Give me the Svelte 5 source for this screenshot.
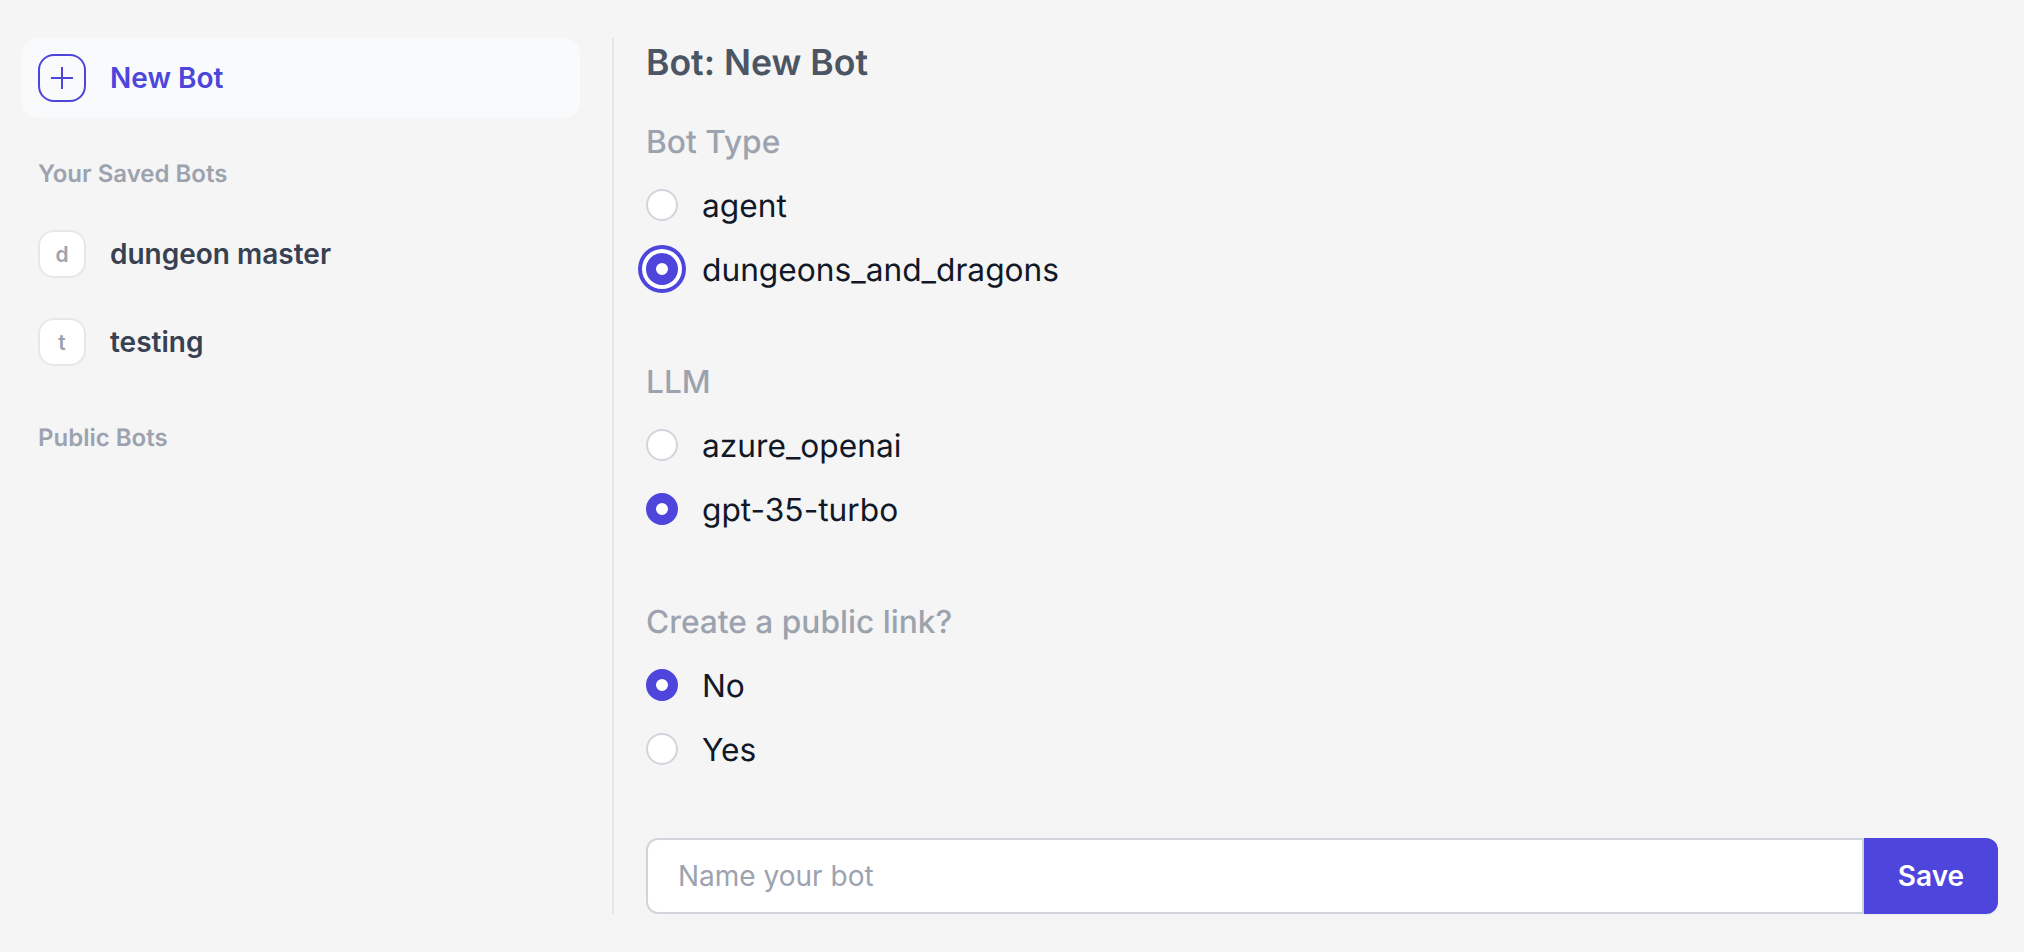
<script>
  let botType = $state("dungeons_and_dragons");
  let llm = $state("gpt-35-turbo");
  let isPublic = $state("No");
  let name = $state("");

  const savedBots = ["dungeon master", "testing"];

  const groups = [
    { label: "Bot Type", options: ["agent", "dungeons_and_dragons"] },
    { label: "LLM", options: ["azure_openai", "gpt-35-turbo"] },
    { label: "Create a public link?", options: ["No", "Yes"] }
  ];

  function getValue(i) {
    return [botType, llm, isPublic][i];
  }
  function setValue(i, v) {
    if (i === 0) botType = v;
    if (i === 1) llm = v;
    if (i === 2) isPublic = v;
  }
</script>

<div class="page">
  <aside class="sidebar">
    <button class="bot-row new-bot">
      <span class="bot-icon plus">
        <svg width="24" height="24" viewBox="0 0 24 24" fill="none" stroke="currentColor" stroke-width="2">
          <path d="M12 1v22M1 12h22" />
        </svg>
      </span>
      New Bot
    </button>

    <h3 class="side-label saved">Your Saved Bots</h3>
    <div class="saved-list">
      {#each savedBots as bot}
        <button class="bot-row">
          <span class="bot-icon">{bot[0]}</span>
          {bot}
        </button>
      {/each}
    </div>

    <h3 class="side-label public">Public Bots</h3>
  </aside>

  <main class="content">
    <h1>Bot: New Bot</h1>

    {#each groups as group, i}
      <fieldset>
        <legend>{group.label}</legend>
        {#each group.options as option}
          <label class="option">
            <input
              type="radio"
              class:focused={option === "dungeons_and_dragons"}
              name={group.label}
              value={option}
              checked={getValue(i) === option}
              onchange={() => setValue(i, option)}
            />
            {option}
          </label>
        {/each}
      </fieldset>
    {/each}

    <form class="save-form" onsubmit={(e) => e.preventDefault()}>
      <input class="name-input" type="text" placeholder="Name your bot" bind:value={name} />
      <button class="save" type="submit">Save</button>
    </form>
  </main>
</div>

<style>
  :global(body) {
    background: #f5f5f5;
    font-family: Inter, "Liberation Sans", sans-serif;
    text-rendering: geometricPrecision;
  }
  .page {
    display: flex;
    box-sizing: border-box;
    height: 952px;
    padding: 38px 26px 38px 22px;
  }
  .sidebar {
    width: 558px;
    flex-shrink: 0;
    margin-right: 32px;
  }
  .bot-row {
    display: flex;
    align-items: center;
    gap: 24px;
    width: 100%;
    height: 80px;
    padding: 0 16px;
    border: none;
    border-radius: 16px;
    background: transparent;
    color: #374151;
    font-family: inherit;
    font-size: 28px;
    font-weight: 600;
    cursor: pointer;
  }
  .new-bot {
    background: #f9fafb;
    color: #4d45dc;
  }
  .bot-icon {
    display: flex;
    align-items: center;
    justify-content: center;
    box-sizing: border-box;
    width: 48px;
    height: 48px;
    border: 2px solid #e5e7eb;
    border-radius: 16px;
    background: #fff;
    color: #9ca3af;
    font-size: 21px;
    font-weight: 600;
  }
  .bot-icon.plus {
    border-color: #4d45dc;
    background: transparent;
    color: #4d45dc;
  }
  .side-label {
    margin: 0;
    padding-left: 16px;
    color: #9ca3af;
    font-size: 24px;
    font-weight: 600;
    line-height: 32px;
  }
  .saved {
    margin-top: 40px;
  }
  .saved-list {
    display: flex;
    flex-direction: column;
    gap: 8px;
    margin-top: 24px;
  }
  .public {
    margin-top: 40px;
  }
  .content {
    display: flex;
    flex: 1;
    flex-direction: column;
    padding-left: 32px;
    border-left: 2px solid #e5e7eb;
  }
  h1 {
    margin: 0 0 35px;
    color: #4b5563;
    font-size: 35.6px;
    font-weight: 600;
    line-height: 49px;
  }
  fieldset {
    display: flex;
    flex-direction: column;
    gap: 16px;
    margin: 0 0 69px;
    padding: 0;
    border: none;
  }
  fieldset legend {
    float: left;
    padding: 0;
    margin-bottom: 3px;
    color: #9ca3af;
    font-size: 31.7px;
    font-weight: 500;
    line-height: 40px;
  }
  .option {
    display: flex;
    align-items: center;
    gap: 24px;
    height: 48px;
    color: #111827;
    font-size: 31.7px;
  }
  input[type="radio"] {
    appearance: none;
    box-sizing: border-box;
    width: 32px;
    height: 32px;
    margin: 0;
    border: 2px solid #d1d5db;
    border-radius: 50%;
    background: #fff;
  }
  input[type="radio"]:checked {
    border: 10px solid #4d45dc;
  }
  input.focused {
    box-shadow: 0 0 0 4px #fff, 0 0 0 8px #4d45dc;
  }
  .save-form {
    display: flex;
    margin-top: -4px;
  }
  .name-input {
    flex: 1;
    box-sizing: border-box;
    height: 76px;
    padding: 0 30px;
    border: 2px solid #d1d5db;
    border-radius: 12px 0 0 12px;
    background: #fff;
    color: #111827;
    font-family: inherit;
    font-size: 28px;
    outline: none;
  }
  .name-input::placeholder {
    color: #9ca3af;
  }
  .save {
    width: 134px;
    height: 76px;
    border: none;
    border-radius: 0 12px 12px 0;
    background: #4d45dc;
    color: #fff;
    font-family: inherit;
    font-size: 28px;
    font-weight: 600;
    cursor: pointer;
    box-shadow: 0 1px 2px rgba(0, 0, 0, 0.05);
  }
</style>
